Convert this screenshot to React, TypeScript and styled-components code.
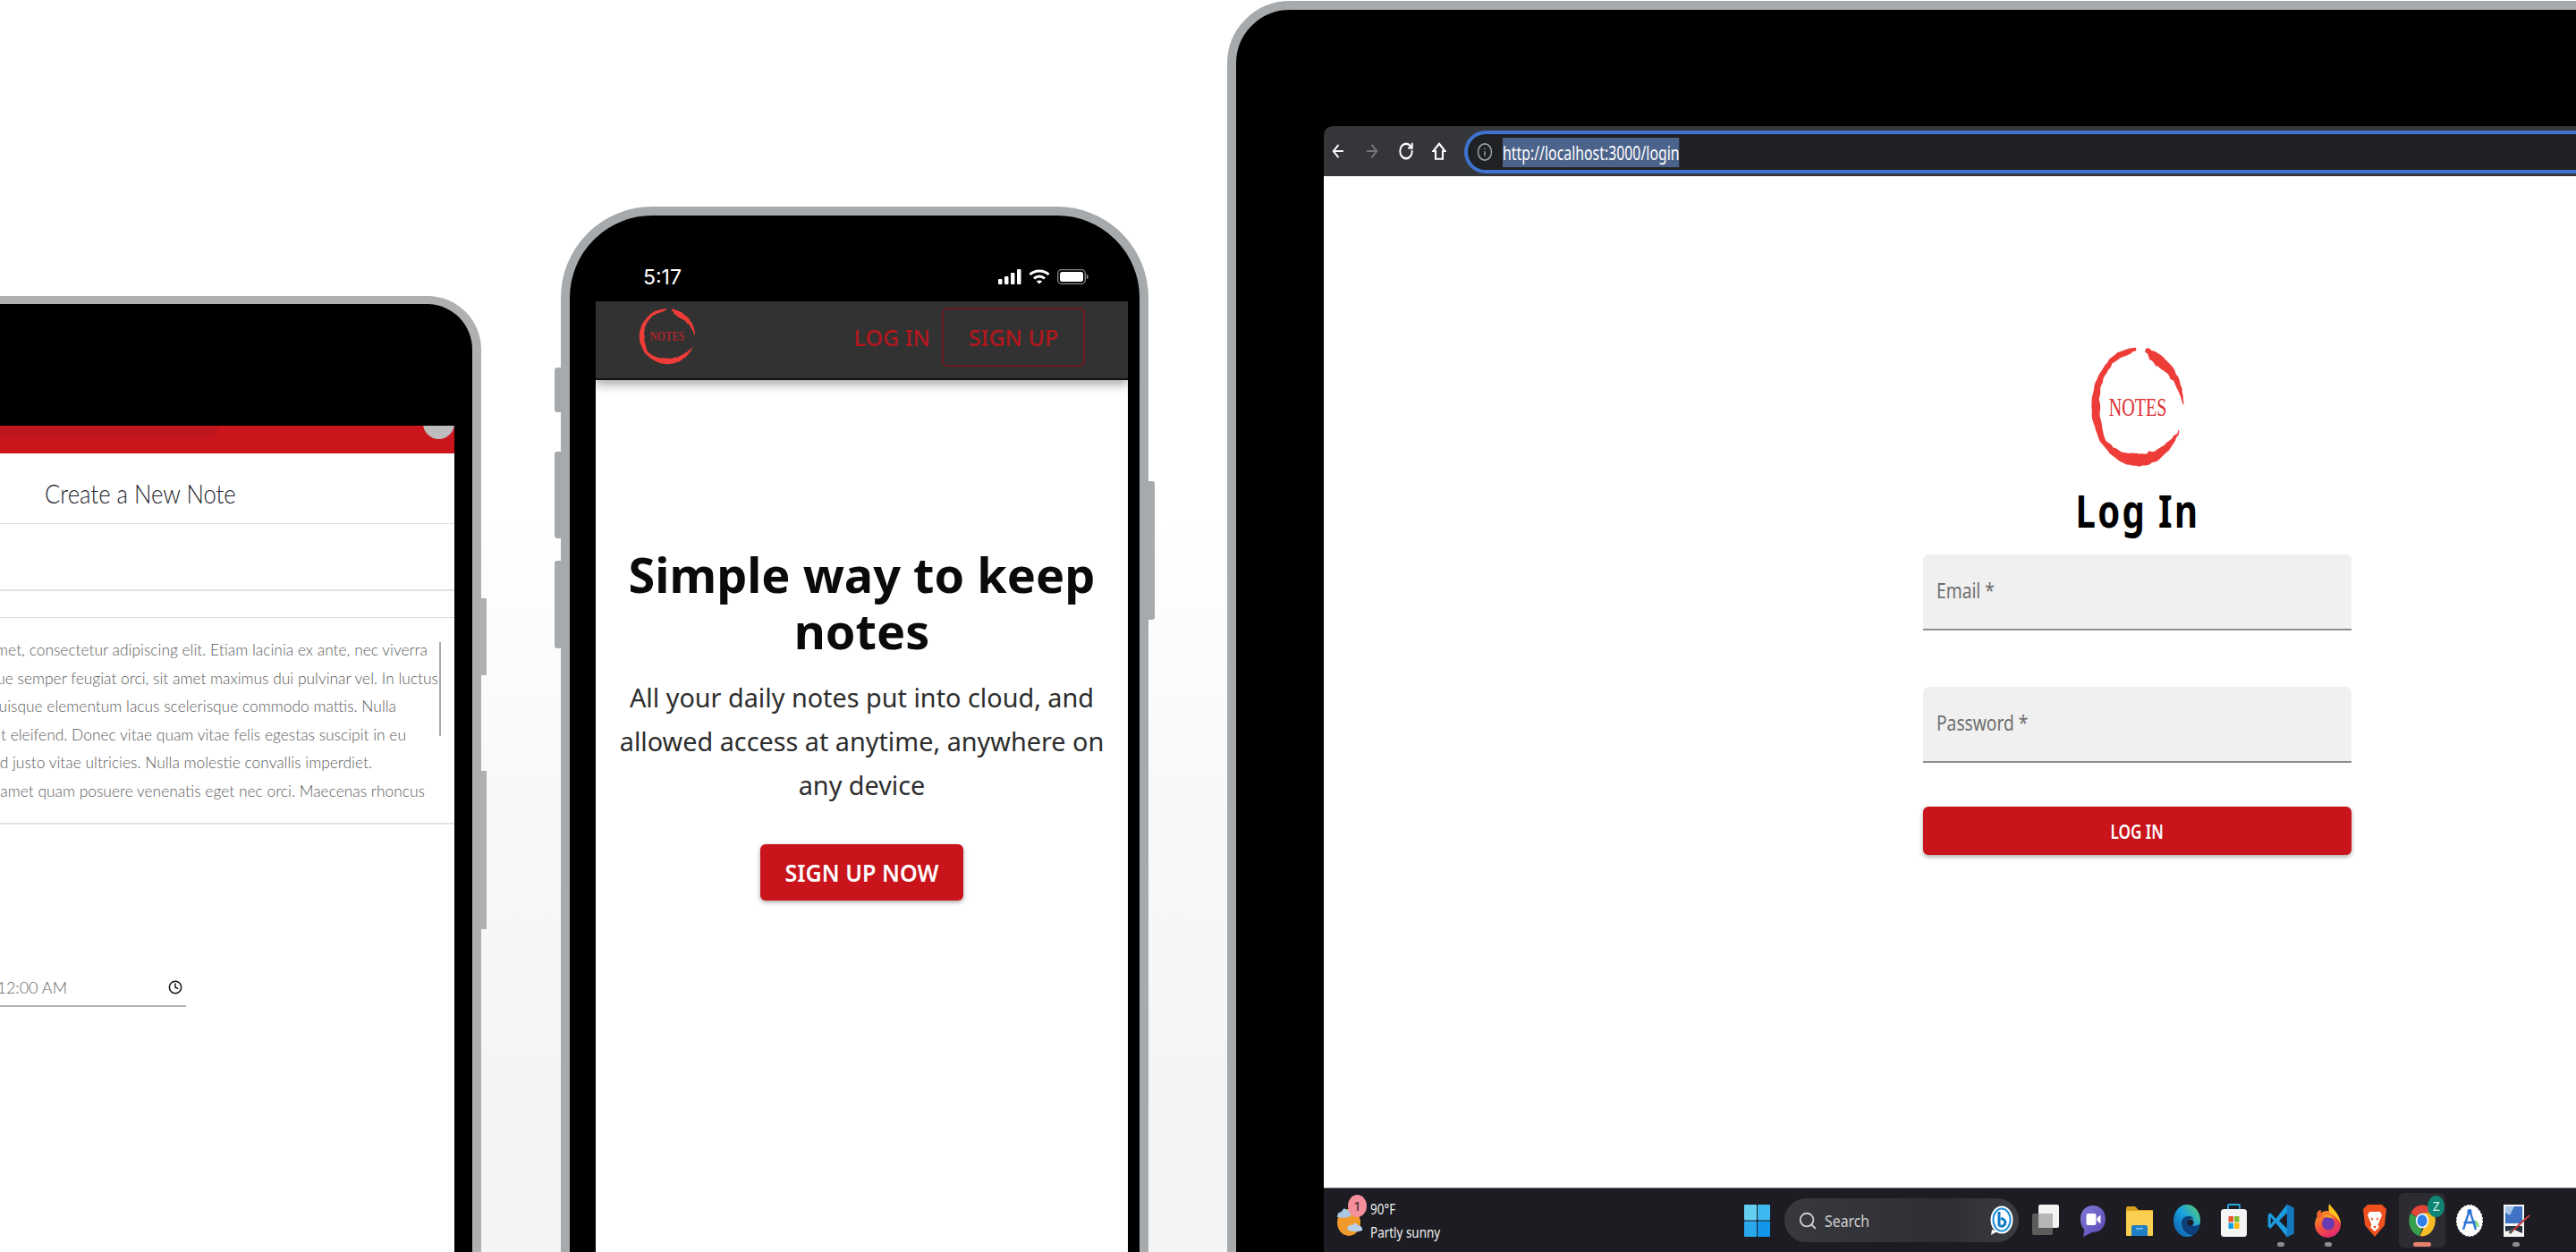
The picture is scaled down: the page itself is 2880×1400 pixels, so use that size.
import { ArrowLeft, ArrowRight, Clock, Info, RotateCw, Search } from "lucide-react";
import styled, { createGlobalStyle } from "styled-components";

const GlobalStyle = createGlobalStyle`
    html, body {
        margin: 0;
        padding: 0;
        background: #fff;
        overflow: hidden;
        font-family: "Noto Sans", "Liberation Sans", sans-serif;
    }
    * { box-sizing: border-box; }
`;

const Stage = styled.main`
    position: relative;
    width: 2880px;
    height: 1400px;
    overflow: hidden;
    background: linear-gradient(180deg, #fff 0, #fff 42%, #f9f9f9 62%, #f4f4f4 90%, #f4f4f4 100%);
`;

/* ---------- tablet ---------- */

const Tablet = styled.section`
    position: absolute;
    left: -400px;
    top: 331px;
    width: 938px;
    height: 1200px;
    background: #000;
    border: solid #b0b0b0;
    border-width: 9px 10px 0 0;
    border-radius: 0 60px 0 0;
    padding: 136px 20px 0 30px;
`;

const SideKey = styled.span<{ $top: number; $height: number }>`
    position: absolute;
    right: -16px;
    top: ${p => p.$top}px;
    width: 6px;
    height: ${p => p.$height}px;
    background: #b0b0b0;
`;

const TabletScreen = styled.div`
    position: relative;
    height: 100%;
    background: #fff;
    overflow: hidden;
    font-family: "Lato", "Open Sans", sans-serif;
`;

const RedBand = styled.div`
    position: relative;
    height: 31px;
    background: #cb151c;
    overflow: hidden;
`;

const BandTab = styled.span`
    position: absolute;
    left: 0;
    top: 0;
    width: 615px;
    height: 13px;
    background: #be161c;
    border-radius: 0 0 14px 0;
`;

const Avatar = styled.span`
    position: absolute;
    right: 0;
    top: -20px;
    width: 35px;
    height: 35px;
    border-radius: 50%;
    background: #bdbdbd;
`;

const NoteTitleRow = styled.div`
    height: 79px;
    border-bottom: 1px solid #ddd;
    padding: 10px 0 0 420px;
    display: flex;
    align-items: center;
`;

const NoteTitle = styled.h2`
    margin: 0;
    font-size: 29px;
    font-weight: 300;
    color: #1c1c2c;
    white-space: nowrap;
    transform: scaleX(0.887);
    transform-origin: left center;
`;

const EmptyField = styled.div`
    height: 75px;
    border-bottom: 2px solid #e2e2e2;
`;

const NoteBody = styled.div`
    position: relative;
    margin-top: 29px;
    border-top: 1px solid #ddd;
    border-bottom: 2px solid #e2e2e2;
    padding: 20px 0 20px;
`;

const NoteLine = styled.div<{ $end: number }>`
    height: 31.5px;
    line-height: 31.5px;
    font-size: 17.4px;
    font-weight: 300;
    color: #5c5c5c;
    white-space: nowrap;
    display: flex;
    justify-content: flex-end;
    padding-right: ${p => p.$end}px;
`;

const NoteScroll = styled.span`
    position: absolute;
    right: 15px;
    top: 27px;
    width: 2px;
    height: 105px;
    background: #aaa;
`;

const TimeRow = styled.div`
    width: 578px;
    height: 36px;
    margin-top: 168px;
    border-bottom: 2px solid #b4b4b4;
    display: flex;
    justify-content: flex-end;
    align-items: center;
    gap: 113px;
    padding: 0 4px 6px 0;
`;

const TimeText = styled.span`
    font-size: 18px;
    font-weight: 300;
    color: #666;
    white-space: nowrap;
    border-left: 1px solid #777;
    padding-left: 4px;
`;

/* ---------- phone ---------- */

const Phone = styled.section`
    position: absolute;
    left: 627px;
    top: 231px;
    width: 657px;
    height: 1300px;
    background: #000;
    border: 10px solid #a7aaad;
    border-radius: 102px 102px 0 0;
    padding: 0 13px 0 29px;
`;

const PhoneKey = styled.span<{ $side: "left" | "right"; $top: number; $height: number }>`
    position: absolute;
    ${p => p.$side}: -17px;
    top: ${p => p.$top}px;
    width: 7px;
    height: ${p => p.$height}px;
    background: #a7aaad;
    border-radius: ${p => (p.$side === "left" ? "3px 0 0 3px" : "0 3px 3px 0")};
`;

const StatusBar = styled.div`
    height: 96px;
    padding: 41px 44px 0 53px;
    display: flex;
    align-items: center;
    justify-content: space-between;
    color: #fff;
`;

const StatusTime = styled.span`
    font-family: "Inter", "Liberation Sans", sans-serif;
    font-size: 23px;
    font-weight: 400;
`;

const StatusIcons = styled.div`
    display: flex;
    align-items: center;
    gap: 8px;
`;

const PhoneNav = styled.nav`
    position: relative;
    height: 88px;
    background: #323232;
    border-bottom: 2px solid #111;
    box-shadow: 0 4px 12px rgba(0, 0, 0, 0.4);
    padding: 7px 48px 0 48px;
    display: flex;
    align-items: flex-start;
`;

const NavLinks = styled.div`
    margin-left: auto;
    display: flex;
    align-items: center;
    gap: 13px;
`;

const NavLink = styled.a`
    font-size: 25px;
    font-weight: 500;
    color: #b3171d;
    white-space: nowrap;
`;

const NavBoxed = styled.a`
    width: 160px;
    height: 66px;
    font-size: 25px;
    font-weight: 500;
    color: #b3171d;
    border: 2px solid #6e1b1f;
    border-radius: 6px;
    display: flex;
    align-items: center;
    justify-content: center;
`;

const Hero = styled.div`
    height: 1100px;
    background: #fff;
    padding-top: 186px;
    display: flex;
    flex-direction: column;
    align-items: center;
    text-align: center;
`;

const HeroTitle = styled.h1`
    margin: 0;
    width: 570px;
    font-size: 54px;
    line-height: 63px;
    font-weight: 700;
    color: #0a0a0a;
`;

const HeroText = styled.p`
    margin: 18px 0 0;
    width: 580px;
    font-size: 28.8px;
    line-height: 49px;
    color: #2d2d2d;
`;

const RedButton = styled.button<{ $wide?: boolean }>`
    border: 0;
    padding: 0;
    background: #c9141b;
    color: #fff;
    font-family: inherit;
    font-weight: 600;
    border-radius: 6px;
    box-shadow: 0 2px 5px rgba(0, 0, 0, 0.35);
    width: ${p => (p.$wide ? "100%" : "227px")};
    height: ${p => (p.$wide ? "54px" : "63px")};
    font-size: ${p => (p.$wide ? "22px" : "27px")};
    margin-top: ${p => (p.$wide ? "49px" : "42px")};
`;

const ButtonLabel = styled.span<{ $squeeze: number }>`
    display: inline-block;
    white-space: nowrap;
    transform: scaleX(${p => p.$squeeze});
`;

/* ---------- laptop ---------- */

const Laptop = styled.section`
    position: absolute;
    left: 1372px;
    top: 1px;
    width: 1700px;
    height: 1600px;
    background: #000;
    border: 10px solid #a7aaad;
    border-radius: 70px 0 0 0;
    padding: 130px 0 0 98px;
`;

const LaptopScreen = styled.div`
    height: 1259px;
    display: flex;
    flex-direction: column;
`;

const Toolbar = styled.header`
    height: 56px;
    background: #35363a;
    border-radius: 10px 0 0 0;
    display: flex;
    align-items: center;
    color: #fff;
    padding-left: 7px;
`;

const ToolIcons = styled.div`
    display: flex;
    align-items: center;
    gap: 20px;
    width: 150px;
`;

const UrlBar = styled.div`
    flex: 1;
    height: 48px;
    margin-top: 2px;
    background: #202124;
    border: 4.5px solid #3f73cf;
    border-right: 0;
    border-radius: 24px 0 0 24px;
    display: flex;
    align-items: center;
    padding-left: 10px;
    gap: 11px;
    color: #9aa0a6;
`;

const UrlText = styled.span`
    display: block;
    width: 274px;
    font-size: 22px;
    line-height: 33px;
    color: #fff;
    background: #4c648c;
    transform: scaleX(0.72);
    transform-origin: left center;
    white-space: nowrap;
`;

const LoginPage = styled.div`
    flex: 1;
    background: #fff;
    padding: 189px 0 0 670px;
`;

const LoginForm = styled.form`
    width: 479px;
    display: flex;
    flex-direction: column;
    align-items: center;
`;

const LoginTitle = styled.h1`
    margin: 18px 0 0;
    height: 60px;
    font-size: 50px;
    line-height: 60px;
    font-weight: 700;
    letter-spacing: 3px;
    color: #000;
    white-space: nowrap;
    transform: scaleX(0.8);
`;

const Field = styled.div<{ $gap: number }>`
    width: 100%;
    height: 85px;
    margin-top: ${p => p.$gap}px;
    background: #f0f0f0;
    border-bottom: 2px solid #8e8e8e;
    border-radius: 6px 6px 0 0;
    padding: 0 0 4px 15px;
    display: flex;
    align-items: center;
`;

const FieldLabel = styled.label`
    font-size: 24px;
    color: #6f6f6f;
    transform: scaleX(0.8);
    transform-origin: left center;
    white-space: nowrap;
`;

const Taskbar = styled.footer`
    height: 72px;
    background: #1c1c22;
    border-top: 1px solid #6a6a70;
    display: flex;
    align-items: center;
    padding-left: 14px;
`;

const Weather = styled.div`
    position: relative;
    width: 456px;
    display: flex;
    align-items: center;
    gap: 8px;
`;

const WeatherBadge = styled.span`
    position: absolute;
    left: 13px;
    top: -3px;
    width: 21px;
    height: 25px;
    border-radius: 50%;
    background: #f58f9b;
    color: #222;
    font-size: 15px;
    line-height: 25px;
    text-align: center;
`;

const WeatherText = styled.div`
    color: #f2f2f2;
    font-size: 16px;
    line-height: 26px;
    white-space: nowrap;
    transform: scaleX(0.84);
    transform-origin: left center;
`;

const WeatherLine = styled.div`
    display: block;
`;

const SearchBox = styled.div`
    width: 262px;
    height: 49px;
    margin-left: 16px;
    margin-right: 4px;
    border-radius: 25px;
    background: linear-gradient(90deg, #38393e, #2e2f34 70%, #3c3d42);
    color: #cfcfcf;
    display: flex;
    align-items: center;
    padding: 0 6px 0 15px;
    gap: 8px;
`;

const SearchLabel = styled.span`
    font-size: 18px;
    transform: scaleX(0.88);
    transform-origin: left center;
`;

const BingMark = styled.span`
    margin-left: auto;
    display: flex;
`;

const AppSlot = styled.div<{ $active?: boolean }>`
    position: relative;
    width: 52.6px;
    height: 61px;
    display: flex;
    align-items: center;
    justify-content: center;
    border-radius: 6px;
    background: ${p => (p.$active ? "#2c2c32" : "transparent")};
`;

const AppDot = styled.span<{ $active?: boolean }>`
    position: absolute;
    left: 50%;
    bottom: 1px;
    transform: translateX(-50%);
    width: ${p => (p.$active ? "20px" : "8px")};
    height: 5px;
    border-radius: 3px;
    background: ${p => (p.$active ? "#e8816c" : "#8d8d92")};
`;

const AppBadge = styled.span`
    position: absolute;
    right: 1px;
    top: 3px;
    width: 19px;
    height: 24px;
    border-radius: 50%;
    background: #0f8574;
    color: #d9efe9;
    font-size: 14px;
    line-height: 24px;
    text-align: center;
`;

/* ---------- drawings ---------- */

const lerpTable = (table: number[][], a: number) => {
    for (let i = 1; i < table.length; i++) {
        if (a <= table[i][0]) {
            const [a0, v0] = table[i - 1];
            const [a1, v1] = table[i];
            return v0 + ((v1 - v0) * (a - a0)) / (a1 - a0);
        }
    }
    return table[table.length - 1][1];
};

const jitter = (i: number) => {
    const n = Math.sin(i * 12.9898) * 43758.5453;
    return n - Math.floor(n) - 0.5;
};

const roughArc = (table: number[][]) => {
    const from = table[0][0];
    const to = table[table.length - 1][0];
    const outer: string[] = [];
    const inner: string[] = [];
    const steps = Math.round((to - from) / 4);
    for (let i = 0; i <= steps; i++) {
        const a = from + ((to - from) * i) / steps;
        const rad = (a * Math.PI) / 180;
        const t = lerpTable(table, a);
        const ro = 48.5 + jitter(i) * 1.2;
        const ri = ro - t - jitter(i + 50) * 0.8;
        outer.push(`${(50 + ro * Math.sin(rad)).toFixed(1)} ${(50 - ro * Math.cos(rad)).toFixed(1)}`);
        inner.unshift(`${(50 + ri * Math.sin(rad)).toFixed(1)} ${(50 - ri * Math.cos(rad)).toFixed(1)}`);
    }
    return `M${outer.join("L")}L${inner.join("L")}Z`;
};

const arcOne = roughArc([[10, 3], [18, 7.5], [30, 10], [50, 8], [70, 5], [88, 1]]);
const arcTwo = roughArc([[114, 1], [135, 6], [160, 9.5], [185, 10.5], [205, 8], [230, 5], [250, 8], [270, 9], [290, 6.5], [320, 5], [345, 5], [358, 2.5]]);

function NotesLogo({ width, height, ink, bold }: { width: number; height: number; ink: string; bold?: boolean }) {
    return (
        <svg width={width} height={height} viewBox="0 0 100 100" preserveAspectRatio="none">
            <path d={arcOne} fill="#ee3d38" />
            <path d={arcTwo} fill="#ee3d38" />
            <text x="50" y="58" textAnchor="middle" fontFamily="Liberation Serif, serif" fontSize="22" fontWeight={bold ? 700 : 400} fill={ink} textLength="61" lengthAdjust="spacingAndGlyphs">NOTES</text>
        </svg>
    );
}

function HomeIcon() {
    return (
        <svg width="16" height="21" viewBox="0 0 18 24" fill="none" stroke="#fff" strokeWidth="2.4" preserveAspectRatio="none">
            <path d="M9 2 L16.5 11.5 H13.5 V21.5 H4.5 V11.5 H1.5 Z" />
        </svg>
    );
}

function Cellular() {
    return (
        <svg width="26" height="17" viewBox="0 0 26 17" fill="#fff">
            <rect x="0" y="11" width="4.5" height="6" rx="1" />
            <rect x="7" y="8" width="4.5" height="9" rx="1" />
            <rect x="14" y="4" width="4.5" height="13" rx="1" />
            <rect x="21" y="0" width="4.5" height="17" rx="1" />
        </svg>
    );
}

function Wifi() {
    return (
        <svg width="24" height="17" viewBox="0 0 24 17" fill="none" stroke="#fff" strokeWidth="3">
            <path d="M1.5 6 C7 0.5 17 0.5 22.5 6" />
            <path d="M6 10.5 C9.5 7 14.5 7 18 10.5" />
            <path d="M12 16.5 L8.8 13.5 C10.5 12 13.5 12 15.2 13.5 Z" fill="#fff" stroke="none" />
        </svg>
    );
}

function Battery() {
    return (
        <svg width="35" height="17" viewBox="0 0 35 17">
            <rect x="0.7" y="0.7" width="30.6" height="15.6" rx="4" fill="none" stroke="#8a8a8a" strokeWidth="1.3" />
            <rect x="3" y="3" width="26" height="11" rx="2.5" fill="#fff" />
            <rect x="32.8" y="6" width="1.7" height="5" rx="0.8" fill="#8a8a8a" />
        </svg>
    );
}

function WeatherIcon() {
    return (
        <svg width="30" height="38" viewBox="0 0 30 38">
            <ellipse cx="14" cy="21" rx="13" ry="15" fill="#ef9a2a" />
            <path d="M1 15 Q1 9 6 9 Q8 3 12 7 Q17 8 16 14 Q10 17 1 15Z" fill="#a9c6e6" />
            <path d="M12 29 Q13 23 18 24 Q21 19 24 24 Q30 25 29 30 Q20 33 12 29Z" fill="#b8d0ea" />
        </svg>
    );
}

function WinLogo() {
    return (
        <svg width="29" height="36" viewBox="0 0 29 36">
            <rect x="0" y="0" width="14" height="17.5" rx="1" fill="#63d0f2" />
            <rect x="15" y="0" width="14" height="17.5" rx="1" fill="#3fb8ef" />
            <rect x="0" y="18.5" width="14" height="17.5" rx="1" fill="#2aa8ee" />
            <rect x="15" y="18.5" width="14" height="17.5" rx="1" fill="#1296ea" />
        </svg>
    );
}

function BingIcon() {
    return (
        <svg width="26" height="34" viewBox="0 0 26 34">
            <ellipse cx="13" cy="16" rx="12.5" ry="15.5" fill="#fff" />
            <path d="M2 27 L1 33 L8 29Z" fill="#fff" />
            <ellipse cx="13" cy="16" rx="9.5" ry="12.5" fill="none" stroke="#1f8fd8" strokeWidth="2" />
            <path d="M10 7 V22 Q13 25 16.5 21 Q18 17 14 15 L12 14.5" fill="none" stroke="#0f7bc8" strokeWidth="3" />
        </svg>
    );
}

const TaskViewIcon = () => (
    <svg width="30" height="36" viewBox="0 0 30 36">
        <rect x="7" y="0" width="23" height="26" rx="2" fill="#f3f3f3" />
        <rect x="0" y="10" width="23" height="24" rx="2" fill="#5c5c5c" />
        <rect x="7" y="10" width="16" height="16" fill="#b5b5b5" />
    </svg>
);

const MeetIcon = () => (
    <svg width="28" height="36" viewBox="0 0 28 36">
        <defs>
            <linearGradient id="meetFill" x1="0" y1="0" x2="1" y2="1">
                <stop offset="0" stopColor="#7f7ad6" />
                <stop offset="1" stopColor="#5a48b4" />
            </linearGradient>
        </defs>
        <path d="M14 1 C23 1 28 8 28 16 C28 25 22 31 13 31 L3 36 L4.5 28 C1 25 0 20 0 16 C0 8 5 1 14 1Z" fill="url(#meetFill)" />
        <rect x="6.5" y="10" width="11" height="13" rx="2" fill="#fff" />
        <path d="M18.5 15 L22.5 11.5 V21.5 L18.5 18Z" fill="#fff" />
    </svg>
);

const FolderIcon = () => (
    <svg width="30" height="34" viewBox="0 0 30 34">
        <path d="M0 3 Q0 1 2 1 H10 L14 5 H30 V33 H0Z" fill="#d9a11f" />
        <rect x="0" y="6" width="30" height="28" rx="1" fill="#fbd052" />
        <path d="M6 34 V24 Q6 22 8 22 H22 Q24 22 24 24 V34Z" fill="#1f7fc4" />
        <rect x="11" y="25" width="8" height="1.5" fill="#8cc4ea" />
    </svg>
);

const EdgeIcon = () => (
    <svg width="30" height="36" viewBox="0 0 30 36">
        <defs>
            <linearGradient id="edgeFill" x1="0" y1="1" x2="1" y2="0">
                <stop offset="0" stopColor="#0c59a4" />
                <stop offset="0.55" stopColor="#1ba1e2" />
                <stop offset="1" stopColor="#5ed45c" />
            </linearGradient>
        </defs>
        <ellipse cx="15" cy="18" rx="15" ry="18" fill="url(#edgeFill)" />
        <path d="M30 21 C26 25 19 24 17 21 C15 17 20 14 23 17 C21 11 11 11 9 19 C8 27 15 35 22 34 C26 32 29 27 30 21Z" fill="#0d3f7a" />
        <ellipse cx="19" cy="20" rx="3.5" ry="3.5" fill="#1c1c22" />
    </svg>
);

const StoreIcon = () => (
    <svg width="29" height="38" viewBox="0 0 29 38">
        <path d="M8 7 V2 Q8 1 9 1 H20 Q21 1 21 2 V7" fill="none" stroke="#29a8e0" strokeWidth="1.8" />
        <rect x="0" y="6" width="29" height="31" rx="3.5" fill="#f5f5f5" />
        <rect x="8.5" y="14" width="5.5" height="6.5" fill="#e8552c" />
        <rect x="15" y="14" width="5.5" height="6.5" fill="#7fba2e" />
        <rect x="8.5" y="21.5" width="5.5" height="6.5" fill="#0f9fe8" />
        <rect x="15" y="21.5" width="5.5" height="6.5" fill="#fcb900" />
    </svg>
);

const CodeIcon = () => (
    <svg width="30" height="38" viewBox="0 0 24 24" preserveAspectRatio="none">
        <path d="M17.5 0.5 L23.5 3 V21 L17.5 23.5 L7.5 13.5 L2.8 17.5 L0.5 16.3 V7.7 L2.8 6.5 L7.5 10.5Z" fill="#1d9bdf" />
        <path d="M17.5 0.5 L23.5 3 V21 L17.5 23.5Z" fill="#1579c1" />
        <path d="M17.5 6.5 L10.5 12 L17.5 17.5Z" fill="#1c1c22" />
        <path d="M3 9.5 L5.5 12 L3 14.5Z" fill="#1c1c22" />
    </svg>
);

const FirefoxIcon = () => (
    <svg width="29" height="38" viewBox="0 0 29 38">
        <defs>
            <linearGradient id="foxFill" x1="0" y1="0" x2="0.6" y2="1">
                <stop offset="0" stopColor="#f7a928" />
                <stop offset="0.55" stopColor="#f3523a" />
                <stop offset="1" stopColor="#e1286f" />
            </linearGradient>
        </defs>
        <ellipse cx="14.5" cy="23" rx="14.5" ry="15" fill="url(#foxFill)" />
        <path d="M16 0 C20 6 28 11 29 23 C26 15 20 13 17 11 C15 8 15 4 16 0Z" fill="#fcc21b" />
        <path d="M2 12 C3 8 5 7 7 7 C6 10 8 12 10 12 L4 18Z" fill="#f5662e" />
        <ellipse cx="15" cy="22" rx="7" ry="7.5" fill="#6a3ab2" />
        <path d="M9 14 C13 11 20 13 21 17 C17 15 13 16 9 14Z" fill="#f9a11f" />
    </svg>
);

const BraveIcon = () => (
    <svg width="26" height="38" viewBox="0 0 26 38">
        <path d="M5 1 H21 L26 6 L24 24 L13 37 L2 24 L0 6Z" fill="#f0511e" />
        <path d="M7 9 H19 L21 13 L18 20 L16.5 24 L18 26 L13 31 L8 26 L9.5 24 L8 20 L5 13Z" fill="#fff" />
        <path d="M8.5 15 L11.5 17 L10 19Z M17.5 15 L14.5 17 L16 19Z M11 25 H15 L13 28Z" fill="#f0511e" />
    </svg>
);

const ChromeIcon = () => (
    <svg width="32" height="38" viewBox="0 0 24 24" preserveAspectRatio="none">
        <path d="M12 1 A11 11 0 0 1 21.53 6.5 H12 A5.5 5.5 0 0 0 7.24 9.25 L2.47 6.5 A11 11 0 0 1 12 1Z" fill="#e2453a" />
        <path d="M2.47 6.5 L7.24 9.25 L7.24 14.75 A5.5 5.5 0 0 0 12 17.5 L9.1 22.6 A11 11 0 0 1 2.47 6.5Z" fill="#37a04e" transform="rotate(-2 12 12)" />
        <path d="M21.53 6.5 A11 11 0 0 1 10 22.8 L14.8 14.75 A5.5 5.5 0 0 0 12 6.5Z" fill="#f6bd27" />
        <circle cx="12" cy="12" r="5.4" fill="#fff" />
        <circle cx="12" cy="12" r="4.2" fill="#2f7fe9" />
    </svg>
);

const StudioIcon = () => (
    <svg width="30" height="36" viewBox="0 0 30 36">
        <ellipse cx="15" cy="18" rx="14.5" ry="17.5" fill="#fff" stroke="#fff" strokeWidth="1" strokeDasharray="2 2" />
        <path d="M20 17 A7 8 0 0 1 26 25 H20Z" fill="#8fdc8a" />
        <path d="M15 6 L8 28 M15 6 L22 28 M8.5 20 H21.5" fill="none" stroke="#2b74d8" strokeWidth="2.4" />
        <ellipse cx="15" cy="8" rx="2.6" ry="3" fill="#2b74d8" />
    </svg>
);

const PaintIcon = () => (
    <svg width="32" height="36" viewBox="0 0 32 36">
        <rect x="2" y="0" width="23" height="36" fill="#f4f4f4" />
        <rect x="4" y="2" width="19" height="19" fill="#3f72c4" />
        <path d="M4 2 H14 L9 12 L4 9Z" fill="#a8c5ec" />
        <path d="M4 24 H23 V32 L14 28 L4 30Z" fill="#24313f" />
        <path d="M31 12 L9 32" stroke="#c83a3a" strokeWidth="2" />
        <path d="M9 32 L12 27" stroke="#555" strokeWidth="3" />
    </svg>
);

const apps = [
    { name: "taskview", Icon: TaskViewIcon },
    { name: "meet", Icon: MeetIcon },
    { name: "files", Icon: FolderIcon },
    { name: "edge", Icon: EdgeIcon },
    { name: "store", Icon: StoreIcon },
    { name: "code", Icon: CodeIcon, dot: true },
    { name: "firefox", Icon: FirefoxIcon, dot: true },
    { name: "brave", Icon: BraveIcon },
    { name: "chrome", Icon: ChromeIcon, active: true },
    { name: "studio", Icon: StudioIcon },
    { name: "paint", Icon: PaintIcon, dot: true },
];

const noteLines = [
    { end: 30, text: "Lorem ipsum dolor sit amet, consectetur adipiscing elit. Etiam lacinia ex ante, nec viverra" },
    { end: 18, text: "Sed sit amet neque semper feugiat orci, sit amet maximus dui pulvinar vel. In luctus" },
    { end: 65, text: "Nunc at dolor quisque elementum lacus scelerisque commodo mattis. Nulla" },
    { end: 54, text: "Vivamus et tortor ut eleifend. Donec vitae quam vitae felis egestas suscipit in eu" },
    { end: 92, text: "Morbi dignissim sed justo vitae ultricies. Nulla molestie convallis imperdiet." },
    { end: 33, text: "Pellentesque sit amet quam posuere venenatis eget nec orci. Maecenas rhoncus" },
];

function App() {
    return (
        <Stage>
            <GlobalStyle />
            <Tablet>
                <SideKey $top={329} $height={86} />
                <SideKey $top={522} $height={177} />
                <TabletScreen>
                    <RedBand>
                        <BandTab />
                        <Avatar />
                    </RedBand>
                    <NoteTitleRow>
                        <NoteTitle>Create a New Note</NoteTitle>
                    </NoteTitleRow>
                    <EmptyField />
                    <NoteBody>
                        {noteLines.map(line => (
                            <NoteLine key={line.end} $end={line.end}>{line.text}</NoteLine>
                        ))}
                        <NoteScroll />
                    </NoteBody>
                    <TimeRow>
                        <TimeText>12:00 AM</TimeText>
                        <Clock size={16} color="#111" strokeWidth={2.2} />
                    </TimeRow>
                </TabletScreen>
            </Tablet>

            <Phone>
                <PhoneKey $side="left" $top={170} $height={50} />
                <PhoneKey $side="left" $top={264} $height={97} />
                <PhoneKey $side="left" $top={386} $height={98} />
                <PhoneKey $side="right" $top={297} $height={155} />
                <StatusBar>
                    <StatusTime>5:17</StatusTime>
                    <StatusIcons>
                        <Cellular />
                        <Wifi />
                        <Battery />
                    </StatusIcons>
                </StatusBar>
                <PhoneNav>
                    <NotesLogo width={64} height={64} ink="#a5282b" bold />
                    <NavLinks>
                        <NavLink>LOG IN</NavLink>
                        <NavBoxed>SIGN UP</NavBoxed>
                    </NavLinks>
                </PhoneNav>
                <Hero>
                    <HeroTitle>Simple way to keep notes</HeroTitle>
                    <HeroText>All your daily notes put into cloud, and allowed access at anytime, anywhere on any device</HeroText>
                    <RedButton><ButtonLabel $squeeze={0.93}>SIGN UP NOW</ButtonLabel></RedButton>
                </Hero>
            </Phone>

            <Laptop>
                <LaptopScreen>
                    <Toolbar>
                        <ToolIcons>
                            <ArrowLeft width={18} height={22} strokeWidth={2.4} preserveAspectRatio="none" />
                            <ArrowRight width={18} height={22} strokeWidth={2.4} color="#77787b" preserveAspectRatio="none" />
                            <RotateCw width={18} height={22} strokeWidth={2.6} preserveAspectRatio="none" />
                            <HomeIcon />
                        </ToolIcons>
                        <UrlBar>
                            <Info width={18} height={22} preserveAspectRatio="none" />
                            <UrlText>http://localhost:3000/login</UrlText>
                        </UrlBar>
                    </Toolbar>
                    <LoginPage>
                        <LoginForm>
                            <NotesLogo width={106} height={137} ink="#dd3034" />
                            <LoginTitle>Log In</LoginTitle>
                            <Field $gap={19}><FieldLabel>Email *</FieldLabel></Field>
                            <Field $gap={63}><FieldLabel>Password *</FieldLabel></Field>
                            <RedButton $wide><ButtonLabel $squeeze={0.78}>LOG IN</ButtonLabel></RedButton>
                        </LoginForm>
                    </LoginPage>
                    <Taskbar>
                        <Weather>
                            <WeatherIcon />
                            <WeatherBadge>1</WeatherBadge>
                            <WeatherText>
                                <WeatherLine>90°F</WeatherLine>
                                <WeatherLine>Partly sunny</WeatherLine>
                            </WeatherText>
                        </Weather>
                        <WinLogo />
                        <SearchBox>
                            <Search size={22} strokeWidth={2} />
                            <SearchLabel>Search</SearchLabel>
                            <BingMark><BingIcon /></BingMark>
                        </SearchBox>
                        {apps.map(({ name, Icon, dot, active }) => (
                            <AppSlot key={name} $active={active}>
                                <Icon />
                                {active && <AppBadge>Z</AppBadge>}
                                {(dot || active) && <AppDot $active={active} />}
                            </AppSlot>
                        ))}
                    </Taskbar>
                </LaptopScreen>
            </Laptop>
        </Stage>
    );
}

export default App;
